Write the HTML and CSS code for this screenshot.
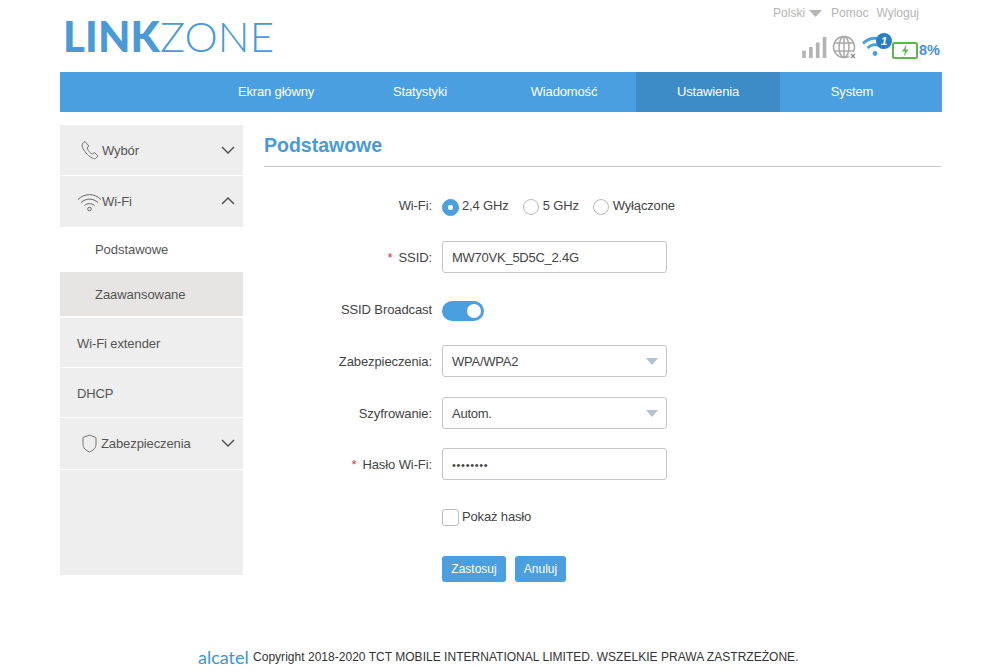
FILE: index.html
```html
<!DOCTYPE html>
<html lang="pl">
<head>
<meta charset="utf-8">
<title>LinkZone</title>
<link rel="stylesheet" href="styles.css">
</head>
<body>
<div class="page">
  <header class="top">
    <div class="logo"><b>LINK</b><span>ZONE</span></div>
    <div class="top-right">
      <div class="links">
        <span>Polski</span>
        <svg class="lang-caret" width="13" height="7" viewBox="0 0 13 7"><path d="M0 0h13L6.500 7z" fill="#b5b5b5"/></svg>
        <span class="l-pomoc">Pomoc</span>
        <span class="l-wyl">Wyloguj</span>
      </div>
      <div class="status">
        <svg class="ic-signal" width="25" height="21" viewBox="0 0 27 23"><g fill="#b4b4b4"><rect x="0" y="15" width="4" height="8"/><rect x="7.500" y="11" width="4" height="12"/><rect x="15" y="6" width="4" height="17"/><rect x="22.500" y="0" width="4" height="23"/></g></svg>
        <svg class="ic-globe" width="26" height="25" viewBox="0 0 26 25" fill="none" stroke="#a9a9a9" stroke-width="1.500"><circle cx="12" cy="12" r="10.500"/><ellipse cx="12" cy="12" rx="5" ry="10.500"/><path d="M12 1.500v21M2 8h20M2 16h20"/><path d="M18 18l6 6M24 18l-6 6" stroke="#fff" stroke-width="5"/><path d="M19 19l4 4M23 19l-4 4" stroke="#8c8c8c" stroke-width="1.200"/></svg>
        <div class="wifi-wrap">
          <svg width="28" height="24" viewBox="0 0 28 24" fill="none" stroke="#4a9fe0" stroke-width="2.800"><path d="M1 10.500C7.500 3.500 18.500 3.500 25 10.500"/><path d="M5.500 15c4.500-4.500 10.500-4.500 15 0"/><circle cx="13" cy="20.500" r="2.400" fill="#4a9fe0" stroke="none"/></svg>
          <span class="badge">1</span>
        </div>
        <svg class="ic-batt" width="26" height="17" viewBox="0 0 26 17"><rect x="1" y="1" width="24" height="15" rx="1.500" fill="#fff" stroke="#5cb848" stroke-width="2"/><path d="M14.500 2.500l-4.500 7h3l-1.500 5.500 5-7.500h-3z" fill="#5cb848"/></svg>
        <span class="pct">8%</span>
      </div>
    </div>
  </header>

  <nav class="nav">
    <a>Ekran główny</a>
    <a>Statystyki</a>
    <a>Wiadomość</a>
    <a class="on">Ustawienia</a>
    <a>System</a>
  </nav>

  <div class="body">
    <aside class="side">
      <div class="s-item s-tall s-first">
        <svg class="s-ic s-phone" width="18" height="20" viewBox="0 0 18 20" fill="none" stroke="#777" stroke-width="1"><path d="M4 1.500L1.500 3.500C.5 5 1.500 9 5 13c3.500 4 7 6 9.500 5.500l2.500-2.500-3.500-3.500-2.200 1.500C9.500 13.500 6.500 10 6 8l1.800-2z"/></svg>
        <span class="s-label">Wybór</span>
        <svg class="chev" width="14" height="8" viewBox="0 0 14 8" fill="none" stroke="#555" stroke-width="1.500"><path d="M1 1l6 6 6-6"/></svg>
      </div>
      <div class="s-item s-tall s-wifi">
        <svg class="s-ic s-wf" width="25" height="20" viewBox="0 0 25 20" fill="none" stroke="#666" stroke-width="1"><path d="M1 7.500C7.500 1 17.500 1 24 7.500"/><path d="M4 10.500c5-4.500 12-4.500 17 0"/><path d="M7.500 13.500c3-2.500 7-2.500 10 0"/><circle cx="12.500" cy="17" r="1.800"/></svg>
        <span>Wi-Fi</span>
        <svg class="chev" width="14" height="8" viewBox="0 0 14 8" fill="none" stroke="#555" stroke-width="1.500"><path d="M1 7l6-6 6 6"/></svg>
      </div>
      <div class="s-sub s-sub-a">Podstawowe</div>
      <div class="s-sub s-sub-b">Zaawansowane</div>
      <div class="s-item s-plain">Wi-Fi extender</div>
      <div class="s-item s-plain">DHCP</div>
      <div class="s-item s-tall s-last">
        <svg class="s-ic s-shield" width="15" height="19" viewBox="0 0 15 19" fill="none" stroke="#777" stroke-width="1"><path d="M7.500 1L14 3.500V10c0 4-3 6.500-6.500 8C4 16.500 1 14 1 10V3.500z"/></svg>
        <span>Zabezpieczenia</span>
        <svg class="chev" width="14" height="8" viewBox="0 0 14 8" fill="none" stroke="#555" stroke-width="1.500"><path d="M1 1l6 6 6-6"/></svg>
      </div>
    </aside>

    <main class="main">
      <h1 class="title">Podstawowe</h1>
      <form class="form">
        <div class="row row-shift">
          <label class="lab">Wi-Fi:</label>
          <div class="ctl radios">
            <span class="radio radio-on"></span><span class="r-text r1">2,4 GHz</span>
            <span class="radio"></span><span class="r-text r2">5 GHz</span>
            <span class="radio"></span><span class="r-text">Wyłączone</span>
          </div>
        </div>
        <div class="row">
          <label class="lab lab-down"><i>*</i>SSID:</label>
          <div class="ctl"><div class="field">MW70VK_5D5C_2.4G</div></div>
        </div>
        <div class="row row-toggle">
          <label class="lab lab-up">SSID Broadcast</label>
          <div class="ctl"><span class="toggle"><span class="knob"></span></span></div>
        </div>
        <div class="row">
          <label class="lab lab-down">Zabezpieczenia:</label>
          <div class="ctl"><div class="field select">WPA/WPA2</div></div>
        </div>
        <div class="row">
          <label class="lab lab-down">Szyfrowanie:</label>
          <div class="ctl"><div class="field select">Autom.</div></div>
        </div>
        <div class="row row-pw">
          <label class="lab lab-down"><i>*</i>Hasło Wi-Fi:</label>
          <div class="ctl"><div class="field pw">••••••••</div></div>
        </div>
        <div class="row">
          <span class="lab"></span>
          <div class="ctl check-line"><span class="check"></span><span>Pokaż hasło</span></div>
        </div>
        <div class="row">
          <span class="lab"></span>
          <div class="ctl btns"><button type="button" class="btn">Zastosuj</button><button type="button" class="btn">Anuluj</button></div>
        </div>
      </form>
    </main>
  </div>

  <footer class="foot"><span class="alc">alcatel</span><span class="copy">Copyright 2018-2020 TCT MOBILE INTERNATIONAL LIMITED. WSZELKIE PRAWA ZASTRZEŻONE.</span></footer>
</div>
</body>
</html>
```
FILE: styles.css
```css
* { box-sizing: border-box; }
html, body { margin: 0; padding: 0; background: #fff; }
body { font: 13px/16px "Liberation Sans", Arial, sans-serif; color: #444; }
.page { width: 999px; height: 672px; overflow: hidden; padding: 0 57px 0 60px; }

.top { height: 72px; display: flex; justify-content: space-between; }
.logo { font-family: Lato, sans-serif; font-size: 42px; line-height: 42px; color: #4a9ad8; letter-spacing: 0.15px; padding: 15px 0 0 3px; }
.logo b { font-weight: 900; }
.logo span { font-weight: 300; }
.top-right { display: flex; flex-direction: column; align-items: flex-end; }
.links { display: flex; align-items: center; height: 16px; margin-top: 5px; padding-right: 23px; font-size: 12px; color: #b5b5b5; }
.lang-caret { margin: 0 0 0 4px; }
.l-pomoc { margin-left: 9px; }
.l-wyl { margin-left: 8px; }
.status { display: flex; align-items: flex-end; height: 27px; margin-top: 12px; padding-right: 2px; }
.ic-signal { margin-bottom: 2px; }
.ic-globe { margin-left: 5px; }
.wifi-wrap { position: relative; width: 28px; height: 24px; margin: 0 0 3px 4px; }
.badge { position: absolute; left: 14px; top: 0; width: 16px; height: 16px; border-radius: 50%; background: #2a7fc4; color: #fff; font-size: 11px; line-height: 16px; text-align: center; font-style: italic; font-weight: bold; }
.ic-batt { margin: 0 0 1px 2px; }
.pct { color: #4a90d9; font-size: 14.500px; font-weight: bold; line-height: 18px; margin: 0 0 1px 1px; }

.nav { height: 40px; background: #4a9fe0; display: flex; padding-left: 144px; }
.nav a { width: 144px; text-align: center; color: #fff; font-size: 13px; letter-spacing: -0.15px; line-height: 39px; }
.nav a.on { background: #3d8bc7; }

.body { display: flex; margin-top: 13px; height: 450px; }
.side { width: 183px; background: #eee; flex: none; }
.s-item { display: flex; align-items: center; color: #555; border-bottom: 1px solid #fff; font-size: 13px; letter-spacing: -0.1px; }
.s-tall { height: 51px; position: relative; }
.s-wifi { border-bottom: 0; }
.s-last { height: 52px; }
.s-plain { height: 50px; padding: 2px 0 0 17px; }
.s-label { padding-top: 2px; }
.s-ic { flex: none; }
.s-phone { margin-left: 21px; margin-right: 3px; }
.s-wf { margin-left: 17px; }
.s-shield { margin-left: 22px; margin-right: 4px; }
.chev { position: absolute; right: 8px; top: 21px; }
.s-sub { padding-left: 35px; color: #555; font-size: 13px; letter-spacing: -0.05px; }
.s-sub-a { height: 45px; background: #fff; line-height: 45px; }
.s-sub-b { height: 46px; background: #e6e5e3; line-height: 45px; border-bottom: 2px solid #fff; }

.main { flex: 1; margin: 0 1px 0 21px; }
.title { margin: 0; height: 42px; border-bottom: 1px solid #c8c8c8; color: #4a9ad8; font-size: 19.500px; line-height: 40px; font-weight: bold; }
.form { margin-top: 12px; }
.row { display: flex; align-items: center; height: 52px; }
.row-shift { padding-top: 2px; }
.row-toggle { padding-top: 4px; }
.row-pw { height: 50px; margin-bottom: 2px; }
.lab { width: 168px; text-align: right; font-size: 13px; letter-spacing: -0.1px; color: #444; flex: none; }
.lab-down { padding-top: 2px; }
.lab-up { padding-bottom: 2px; }
.lab i { color: #d0354a; font-style: normal; margin-right: 6px; }
.ctl { margin-left: 10px; display: flex; align-items: center; letter-spacing: -0.15px; }
.radio { width: 16px; height: 16px; border: 1px solid #bbb; border-radius: 50%; background: #fff; margin: 2px 4px 0 0; position: relative; }
.radio-on { width: 17px; height: 17px; margin-right: 3px; background: #4a9fe0; border-color: #4a9fe0; }
.radio-on::after { content: ""; position: absolute; left: 5px; top: 5px; width: 5px; height: 5px; background: #fff; border-radius: 2px; }
.r-text { color: #444; }
.r1 { margin-right: 14px; }
.r2 { margin-right: 14px; }
.field { width: 225px; height: 32px; border: 1px solid #c6c6c6; border-radius: 3px; line-height: 32px; padding-left: 9px; color: #444; letter-spacing: -0.25px; position: relative; background: #fff; }
.select::after { content: ""; position: absolute; right: 8px; top: 12px; border: 6px solid transparent; border-top: 7px solid #b4c0cc; border-bottom: 0; }
.pw { font-size: 11px; letter-spacing: 0.7px; color: #444; }
.toggle { display: block; width: 42px; height: 20px; border-radius: 10px; background: #4a9fe0; position: relative; }
.knob { position: absolute; right: 3px; top: 3px; width: 14px; height: 14px; border-radius: 50%; background: #fff; }
.check-line { color: #444; }
.check { width: 17px; height: 17px; border: 1px solid #bbb; border-radius: 3px; margin-right: 3px; background: #fff; }
.btns { gap: 9px; }
.btn { height: 26px; padding: 0; width: 64px; border: 0; border-radius: 3px; background: #4a9fe0; color: #fff; font: 12px "Liberation Sans", Arial, sans-serif; }
.btn + .btn { width: 51px; }

.foot { margin-top: 74px; height: 16px; display: flex; align-items: center; padding-left: 138px; font-size: 12px; color: #333; white-space: nowrap; }
.alc { font-family: Lato, sans-serif; font-weight: 400; font-size: 18px; color: #3f94d6; width: 55px; flex: none; }
.copy { letter-spacing: 0.025px; }
```
